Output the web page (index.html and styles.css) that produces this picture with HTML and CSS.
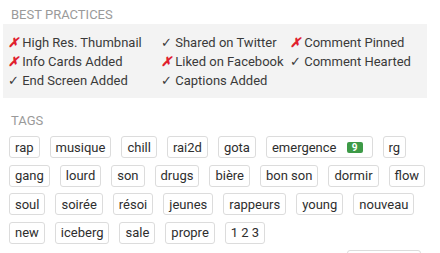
FILE: index.html
```html
<!DOCTYPE html>
<html lang="en">
<head>
    <meta charset="UTF-8">
    <meta name="viewport" content="width=device-width, initial-scale=1.0">
    <title>Video Audit</title>
    <link rel="stylesheet" href="styles.css">
</head>
<body>
    <h3 class="heading">Best Practices</h3>
    <div class="practices">
        <div><span class="bad">&#10007;</span> High Res. Thumbnail</div>
        <div><span class="good">&#10003;</span> Shared on Twitter</div>
        <div><span class="bad">&#10007;</span> Comment Pinned</div>
        <div><span class="bad">&#10007;</span> Info Cards Added</div>
        <div><span class="bad">&#10007;</span> Liked on Facebook</div>
        <div><span class="good">&#10003;</span> Comment Hearted</div>
        <div><span class="good">&#10003;</span> End Screen Added</div>
        <div><span class="good">&#10003;</span> Captions Added</div>
    </div>

    <h3 class="heading tags-heading">Tags</h3>
    <div class="tags">
        <span class="tag">rap</span>
        <span class="tag">musique</span>
        <span class="tag">chill</span>
        <span class="tag">rai2d</span>
        <span class="tag">gota</span>
        <span class="tag">emergence<span class="rank">9</span></span>
        <span class="tag">rg</span>
        <span class="tag">gang</span>
        <span class="tag">lourd</span>
        <span class="tag">son</span>
        <span class="tag">drugs</span>
        <span class="tag">bière</span>
        <span class="tag">bon son</span>
        <span class="tag">dormir</span>
        <span class="tag">flow</span>
        <span class="tag">soul</span>
        <span class="tag">soirée</span>
        <span class="tag">résoi</span>
        <span class="tag">jeunes</span>
        <span class="tag">rappeurs</span>
        <span class="tag">young</span>
        <span class="tag">nouveau</span>
        <span class="tag">new</span>
        <span class="tag">iceberg</span>
        <span class="tag">sale</span>
        <span class="tag">propre</span>
        <span class="tag">1 2 3</span>
    </div>
    <div class="actions">
        <button class="copy-btn">Copy tags</button>
    </div>
</body>
</html>
```

FILE: styles.css
```css
body {
    font-family: Roboto, "Liberation Sans", sans-serif;
    margin: 0;
    padding: 0 13px 0 3px;
    background-color: #fff;
    color: #3a3a3a;
}
.heading {
    margin: 0;
    padding: 7px 0 2px 8px;
    font-size: 13px;
    line-height: 15px;
    font-weight: 400;
    text-transform: uppercase;
    color: #9a9a9a;
}
.practices {
    display: grid;
    grid-template-columns: 153px 129px auto;
    background-color: #f3f3f3;
    padding: 9px 5px 8px;
    font-size: 13px;
    line-height: 19px;
}
.bad {
    color: #e0202e;
    font-style: italic;
    font-weight: 700;
}
.good {
    color: #3a3a3a;
}
.tags-heading {
    padding-top: 15px;
    padding-bottom: 8px;
}
.tags {
    display: flex;
    flex-wrap: wrap;
    gap: 6.5px 10px;
    padding-left: 6px;
}
.tag {
    display: inline-flex;
    align-items: center;
    box-sizing: border-box;
    height: 22px;
    padding: 0 5px;
    border: 1px solid #dcdcdc;
    border-radius: 3px;
    font-size: 13px;
    color: #2e2e2e;
}
.rank {
    margin: 0 4px 0 10px;
    width: 16px;
    text-align: center;
    background-color: #3d9a47;
    color: #fff;
    font-size: 10px;
    font-weight: 700;
    line-height: 11px;
    border-radius: 2px;
}
.actions {
    display: flex;
    justify-content: flex-end;
    padding: 6.5px 6px 0 0;
}
.copy-btn {
    width: 74px;
    height: 34px;
    border: 1px solid #dcdcdc;
    border-radius: 3px;
    background: #fff;
    font-family: inherit;
    font-size: 12px;
    color: #333;
}
```
